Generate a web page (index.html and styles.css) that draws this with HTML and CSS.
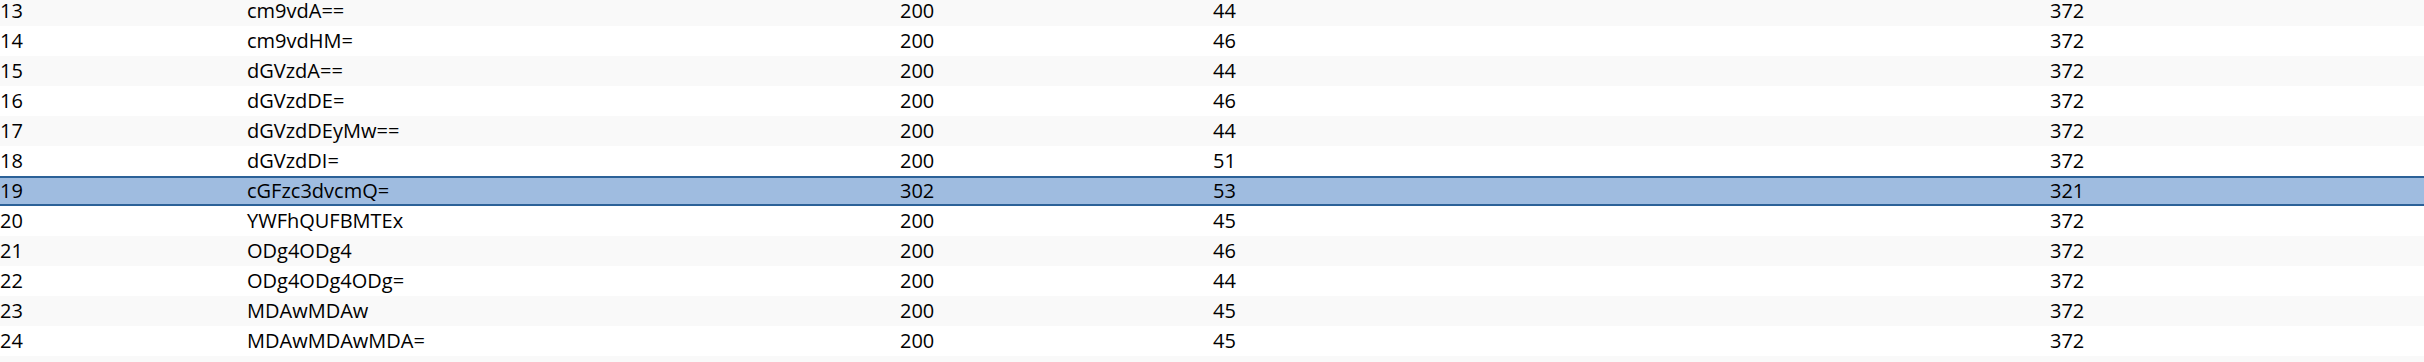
FILE: index.html
```html
<!DOCTYPE html>
<html lang="en">
<head>
<meta charset="utf-8">
<title>Table</title>
<link rel="stylesheet" href="styles.css">
</head>
<body>
<div class="table">
  <div class="row alt"><span>13</span><span>cm9vdA==</span><span>200</span><span>44</span><span>372</span></div>
  <div class="row"><span>14</span><span>cm9vdHM=</span><span>200</span><span>46</span><span>372</span></div>
  <div class="row alt"><span>15</span><span>dGVzdA==</span><span>200</span><span>44</span><span>372</span></div>
  <div class="row"><span>16</span><span>dGVzdDE=</span><span>200</span><span>46</span><span>372</span></div>
  <div class="row alt"><span>17</span><span>dGVzdDEyMw==</span><span>200</span><span>44</span><span>372</span></div>
  <div class="row"><span>18</span><span>dGVzdDI=</span><span>200</span><span>51</span><span>372</span></div>
  <div class="row selected"><span>19</span><span>cGFzc3dvcmQ=</span><span>302</span><span>53</span><span>321</span></div>
  <div class="row"><span>20</span><span>YWFhQUFBMTEx</span><span>200</span><span>45</span><span>372</span></div>
  <div class="row alt"><span>21</span><span>ODg4ODg4</span><span>200</span><span>46</span><span>372</span></div>
  <div class="row"><span>22</span><span>ODg4ODg4ODg=</span><span>200</span><span>44</span><span>372</span></div>
  <div class="row alt"><span>23</span><span>MDAwMDAw</span><span>200</span><span>45</span><span>372</span></div>
  <div class="row"><span>24</span><span>MDAwMDAwMDA=</span><span>200</span><span>45</span><span>372</span></div>
  <div class="row alt"><span></span><span></span><span></span><span></span><span></span></div>
</div>
</body>
</html>
```
FILE: styles.css
```css
html, body {
  margin: 0;
  padding: 0;
  background: #ffffff;
  overflow: hidden;
}
body {
  font-family: "Open Sans", "Noto Sans", sans-serif;
  font-size: 20px;
  color: #000000;
}
.table {
  display: flex;
  flex-direction: column;
  margin-top: -4px;
}
.row {
  display: grid;
  grid-template-columns: 247px 653px 313px 837px 1fr;
  height: 30px;
  line-height: 30px;
  box-sizing: border-box;
  background: #ffffff;
  white-space: nowrap;
}
.row.alt {
  background: #f9f9f9;
}
.row.selected {
  background: #9fbce0;
  border-top: 2px solid #2b6198;
  border-bottom: 2px solid #2b6198;
  line-height: 26px;
}
```
